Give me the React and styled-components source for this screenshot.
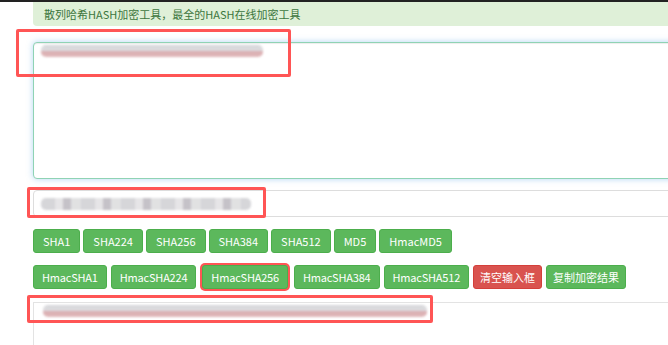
import styled, { createGlobalStyle } from 'styled-components'

const GlobalStyle = createGlobalStyle`
  html, body {
    margin: 0;
    padding: 0;
    background: #fff;
    overflow: hidden;
  }
  body {
    font-family: "Noto Sans CJK SC", "Liberation Sans", sans-serif;
    font-size: 12px;
    color: #333;
  }
`

const firstRow = ['SHA1', 'SHA224', 'SHA256', 'SHA384', 'SHA512', 'MD5', 'HmacMD5']
const secondRow = ['HmacSHA1', 'HmacSHA224', 'HmacSHA256', 'HmacSHA384', 'HmacSHA512']

function App() {
  return (
    <Container>
      <GlobalStyle />
      <TopBar />
      <Wrapper>
        <Alert>散列哈希HASH加密工具，最全的HASH在线加密工具</Alert>
        <TextArea>
          <Smudge width="222px" pink />
        </TextArea>
        <Input>
          <Smudge width="210px" />
        </Input>
        <ButtonRow>
          {firstRow.map((name) => (
            <Button key={name}>{name}</Button>
          ))}
        </ButtonRow>
        <ButtonRow gap="4px">
          {secondRow.map((name) => (
            <Button key={name} tight marked={name === 'HmacSHA256'}>{name}</Button>
          ))}
          <Button type="danger" cjk>清空输入框</Button>
          <Button cjk>复制加密结果</Button>
        </ButtonRow>
        <Output>
          <Smudge width="384px" pink />
        </Output>
      </Wrapper>

      {/* red annotation frames drawn over the screenshot */}
      <Mark style={{ left: 16, top: 29, width: 275, height: 48 }} />
      <Mark style={{ left: 27, top: 187, width: 239, height: 31 }} />
      <Mark style={{ left: 27, top: 295, width: 406, height: 28 }} />
    </Container>
  )
}

const Container = styled.div`
  position: relative;
  width: 668px;
  height: 345px;
  overflow: hidden;
`

const TopBar = styled.div`
  height: 2px;
  background-color: #222;
`

const Wrapper = styled.div`
  width: 700px;
  padding-left: 33px;
  display: flex;
  flex-direction: column;
`

const Alert = styled.div`
  height: 24px;
  box-sizing: border-box;
  padding: 4px 11px 0;
  background-color: #dff0d8;
  color: #3c763d;
  border-radius: 0 0 0 4px;
  font-size: 11px;
  line-height: 16px;
`

const TextArea = styled.div`
  margin-top: 16px;
  height: 137px;
  box-sizing: border-box;
  padding: 2px 7px;
  border: 1px solid #8fd3b4;
  border-radius: 4px;
  box-shadow: inset 0 1px 1px rgba(0, 0, 0, 0.075), 0 0 6px rgba(102, 175, 233, 0.5);
  background: #fff;
`

const Input = styled.div`
  margin-top: 11px;
  height: 27px;
  box-sizing: border-box;
  padding: 0 7px;
  display: flex;
  align-items: center;
  border: 1px solid #ddd;
  border-radius: 4px;
`

const Smudge = styled.div`
  width: ${(props) => props.width};
  height: 12px;
  border-radius: 5px;
  filter: blur(1.2px);
  background: ${(props) =>
    props.pink
      ? 'linear-gradient(180deg, #d4d4d8 0%, #dcdcdf 45%, #d9aaae 55%, #e0b6b8 100%)'
      : 'repeating-linear-gradient(90deg, #cfcfd3 0 14px, #e2e1e3 14px 22px, #bcb8bf 22px 30px, #dcdcde 30px 40px)'};
  opacity: ${(props) => (props.pink ? 0.95 : 0.85)};
`

const ButtonRow = styled.div`
  display: flex;
  gap: ${(props) => props.gap || '3px'};
  margin-top: 12px;
`

const Button = styled.button.withConfig({
  shouldForwardProp: (prop) => !['marked', 'cjk', 'tight'].includes(prop),
})`
  height: 24px;
  padding: 0 ${(props) => (props.cjk ? '6px' : props.tight ? '8px' : '9px')};
  font-family: "Noto Sans CJK SC", "Liberation Sans", sans-serif;
  font-size: 11px;
  letter-spacing: ${(props) => (props.tight ? '-0.2px' : '0')};
  line-height: 22px;
  color: #fff;
  border-radius: 3px;
  border: 1px solid ${(props) => (props.type === 'danger' ? '#d43f3a' : '#4cae4c')};
  background-color: ${(props) => (props.type === 'danger' ? '#d9534f' : '#5cb85c')};
  box-shadow: ${(props) => (props.marked ? '0 0 0 2px #f55' : 'none')};
  margin: ${(props) => (props.marked ? '0 2px' : '0')};
  cursor: pointer;
`

const Output = styled.div`
  margin-top: 13px;
  height: 60px;
  box-sizing: border-box;
  padding: 2px 9px;
  border-top: 1px solid #e3e3e3;
  border-left: 1px solid #e3e3e3;
`

const Mark = styled.div`
  position: absolute;
  box-sizing: border-box;
  border: 3px solid #f55;
  border-radius: 2px;
  pointer-events: none;
`

export default App
